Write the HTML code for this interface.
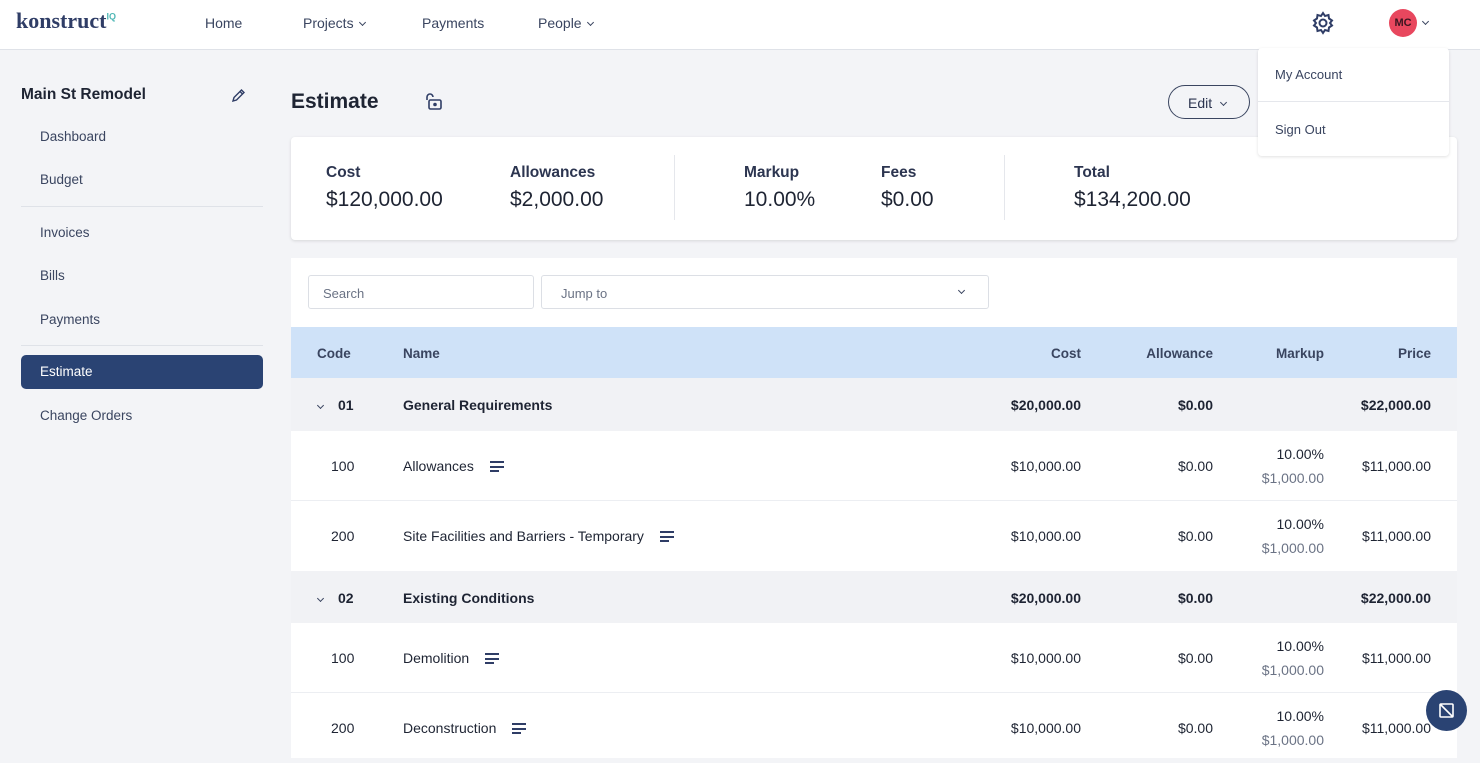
<!DOCTYPE html>
<html><head><style>
*{margin:0;padding:0;box-sizing:border-box}
body{width:1480px;height:747px;overflow:hidden;background:#f3f4f7;font-family:"Liberation Sans",sans-serif;color:#1e2433;position:relative}
.abs{position:absolute}
.nav{left:0;top:0;width:1480px;height:50px;background:#fff;border-bottom:1px solid #dfe2e8}
.nav span{position:absolute;top:15px;font-size:14px;color:#3a4560}
.side a{position:absolute;left:40px;font-size:13.5px;color:#3a4560}
.hr{position:absolute;left:21px;width:242px;height:1px;background:#dfe2e8}
.card{background:#fff;border-radius:4px;box-shadow:0 1px 3px rgba(0,0,0,.12)}
.lab{position:absolute;font-size:15.5px;font-weight:bold;color:#2c3550}
.val{position:absolute;font-size:21px;color:#1e2433}
.row{position:absolute;left:291px;width:1166px;font-size:14px}
.row div{position:absolute}
.r{text-align:right}
.chev{display:inline-block;width:6px;height:6px;border-right:1.5px solid #3a4560;border-bottom:1.5px solid #3a4560;transform:rotate(45deg);margin-left:6px;vertical-align:3px}
.hb{display:inline-block;width:14px;height:11px;margin-left:16px;vertical-align:-1px;background:linear-gradient(#2f3d66,#2f3d66) 0 0/14px 2px no-repeat,linear-gradient(#2f3d66,#2f3d66) 0 4.5px/14px 2px no-repeat,linear-gradient(#2f3d66,#2f3d66) 0 9px/9px 2px no-repeat}
</style></head><body>
<div class="abs nav">
<div class="abs" style="left:16px;top:8px;font-family:'Liberation Serif',serif;font-size:22px;font-weight:bold;color:#2f3d66">konstruct<sup style="font-size:9px;color:#4fb7b5;font-family:'Liberation Sans'">IQ</sup></div>
<span style="left:205px">Home</span>
<span style="left:303px">Projects<i class="chev" style="width:5px;height:5px"></i></span>
<span style="left:422px">Payments</span>
<span style="left:538px">People<i class="chev" style="width:5px;height:5px"></i></span>
<svg class="abs" style="left:1311px;top:11px" width="24" height="24" viewBox="0 0 24 24" fill="none" stroke="#2f3d66" stroke-width="2"><circle cx="12" cy="12" r="3.5"/><path d="M12 2l2 3 3.5-1 .5 3.5 3 2-2 2.5 2 2.5-3 2-.5 3.5-3.5-1-2 3-2-3-3.5 1-.5-3.5-3-2 2-2.5-2-2.5 3-2 .5-3.5 3.5 1z"/></svg>
<div class="abs" style="left:1389px;top:9px;width:28px;height:28px;border-radius:50%;background:#e8475e;font-size:11px;font-weight:bold;color:#3a1520;text-align:center;line-height:28px">MC</div>
<span style="left:1417px;top:14px"><i class="chev" style="width:5px;height:5px"></i></span>
</div>
<div class="side">
<div class="abs" style="left:21px;top:86px;font-size:15.5px;font-weight:bold">Main St Remodel</div>
<svg class="abs" style="left:231px;top:88px" width="15" height="15" viewBox="0 0 15 15" fill="none" stroke="#2f3d66" stroke-width="1.4"><path d="M2 13l1-3.5L10.5 2 13 4.5 5.5 12z M9 3.5l2.5 2.5"/></svg>
<a style="top:129px">Dashboard</a><a style="top:172px">Budget</a>
<div class="hr" style="top:206px"></div>
<a style="top:225px">Invoices</a><a style="top:268px">Bills</a><a style="top:312px">Payments</a>
<div class="hr" style="top:345px"></div>
<div class="abs" style="left:21px;top:355px;width:242px;height:34px;background:#2a4373;border-radius:5px"></div>
<a style="top:364px;color:#fff">Estimate</a>
<a style="top:408px">Change Orders</a>
</div>
<div class="abs" style="left:291px;top:90px;font-size:21px;font-weight:bold">Estimate</div>
<svg class="abs" style="left:424px;top:93px" width="19" height="18" viewBox="0 0 19 18" fill="none" stroke="#2f3d66" stroke-width="1.6"><rect x="5" y="7" width="12" height="9" rx="1.5"/><path d="M3 7V4a3 3 0 016 0"/><circle cx="11" cy="11.5" r="1" fill="#2f3d66"/></svg>
<div class="abs" style="left:1168px;top:85px;width:82px;height:34px;border:1.5px solid #3a4560;border-radius:17px;font-size:14px;color:#2c3550;padding:9px 0 0 19px">Edit<i class="chev" style="width:5px;height:5px;margin-left:9px"></i></div>
<div class="abs card" style="left:291px;top:137px;width:1166px;height:103px"></div>
<div class="abs" style="left:674px;top:155px;width:1px;height:65px;background:#e5e7ec"></div>
<div class="abs" style="left:1004px;top:155px;width:1px;height:65px;background:#e5e7ec"></div>
<div class="lab" style="left:326px;top:164px">Cost</div><div class="val" style="left:326px;top:188px">$120,000.00</div>
<div class="lab" style="left:510px;top:164px">Allowances</div><div class="val" style="left:510px;top:188px">$2,000.00</div>
<div class="lab" style="left:744px;top:164px">Markup</div><div class="val" style="left:744px;top:188px">10.00%</div>
<div class="lab" style="left:881px;top:164px">Fees</div><div class="val" style="left:881px;top:188px">$0.00</div>
<div class="lab" style="left:1074px;top:164px">Total</div><div class="val" style="left:1074px;top:188px">$134,200.00</div>
<div class="abs card" style="left:1258px;top:48px;width:191px;height:108px"></div>
<div class="abs" style="left:1258px;top:101px;width:191px;height:1px;background:#e5e7ec"></div>
<div class="abs" style="left:1275px;top:67px;font-size:13px;color:#3a4560">My Account</div>
<div class="abs" style="left:1275px;top:122px;font-size:13px;color:#3a4560">Sign Out</div>
<div class="abs" style="left:291px;top:258px;width:1166px;height:500px;background:#fff"></div>
<div class="abs" style="left:308px;top:275px;width:226px;height:34px;border:1px solid #dcdfe5;border-radius:3px;font-size:13px;color:#6b7385;padding:10px 14px">Search</div>
<div class="abs" style="left:541px;top:275px;width:448px;height:34px;border:1px solid #dcdfe5;border-radius:3px;font-size:13px;color:#6b7385;padding:10px 19px">Jump to<i class="chev" style="position:absolute;right:24px;top:12px;width:5px;height:5px"></i></div>
<div class="row" style="top:327px;height:51px;background:#cfe2f8;font-weight:bold;color:#3a4560;font-size:13.5px">
<div style="left:26px;top:19px">Code</div><div style="left:112px;top:19px">Name</div>
<div class="r" style="right:376px;top:19px">Cost</div><div class="r" style="right:244px;top:19px">Allowance</div><div class="r" style="right:133px;top:19px">Markup</div><div class="r" style="right:26px;top:19px">Price</div></div>

<div class="row" style="top:378px;height:53px;background:#f1f2f5;font-weight:bold">
<div style="left:21px;top:20px"><i class="chev" style="width:5px;height:5px"></i></div><div style="left:47px;top:19px">01</div><div style="left:112px;top:19px">General Requirements</div>
<div class="r" style="right:376px;top:19px">$20,000.00</div><div class="r" style="right:244px;top:19px">$0.00</div><div class="r" style="right:26px;top:19px">$22,000.00</div></div>
<div class="row" style="top:431px;height:70px;border-bottom:1px solid #eceef2">
<div style="left:40px;top:27px">100</div><div style="left:112px;top:27px">Allowances<i class="hb"></i></div>
<div class="r" style="right:376px;top:27px">$10,000.00</div><div class="r" style="right:244px;top:27px">$0.00</div>
<div class="r" style="right:133px;top:15px">10.00%</div><div class="r" style="right:133px;top:39px;color:#6b7385">$1,000.00</div><div class="r" style="right:26px;top:27px">$11,000.00</div></div>
<div class="row" style="top:501px;height:70px">
<div style="left:40px;top:27px">200</div><div style="left:112px;top:27px">Site Facilities and Barriers - Temporary<i class="hb"></i></div>
<div class="r" style="right:376px;top:27px">$10,000.00</div><div class="r" style="right:244px;top:27px">$0.00</div>
<div class="r" style="right:133px;top:15px">10.00%</div><div class="r" style="right:133px;top:39px;color:#6b7385">$1,000.00</div><div class="r" style="right:26px;top:27px">$11,000.00</div></div>
<div class="row" style="top:571px;height:52px;background:#f1f2f5;font-weight:bold">
<div style="left:21px;top:20px"><i class="chev" style="width:5px;height:5px"></i></div><div style="left:47px;top:19px">02</div><div style="left:112px;top:19px">Existing Conditions</div>
<div class="r" style="right:376px;top:19px">$20,000.00</div><div class="r" style="right:244px;top:19px">$0.00</div><div class="r" style="right:26px;top:19px">$22,000.00</div></div>
<div class="row" style="top:623px;height:70px;border-bottom:1px solid #eceef2">
<div style="left:40px;top:27px">100</div><div style="left:112px;top:27px">Demolition<i class="hb"></i></div>
<div class="r" style="right:376px;top:27px">$10,000.00</div><div class="r" style="right:244px;top:27px">$0.00</div>
<div class="r" style="right:133px;top:15px">10.00%</div><div class="r" style="right:133px;top:39px;color:#6b7385">$1,000.00</div><div class="r" style="right:26px;top:27px">$11,000.00</div></div>
<div class="row" style="top:693px;height:70px">
<div style="left:40px;top:27px">200</div><div style="left:112px;top:27px">Deconstruction<i class="hb"></i></div>
<div class="r" style="right:376px;top:27px">$10,000.00</div><div class="r" style="right:244px;top:27px">$0.00</div>
<div class="r" style="right:133px;top:15px">10.00%</div><div class="r" style="right:133px;top:39px;color:#6b7385">$1,000.00</div><div class="r" style="right:26px;top:27px">$11,000.00</div></div>
<div class="abs" style="left:1426px;top:690px;width:41px;height:41px;border-radius:50%;background:#2a4373"></div>
<svg class="abs" style="left:1438px;top:702px" width="17" height="17" viewBox="0 0 17 17" fill="none" stroke="#fff" stroke-width="1.6"><rect x="2" y="2" width="13" height="13" rx="1"/><path d="M2 2l13 13"/></svg>
</body></html>
